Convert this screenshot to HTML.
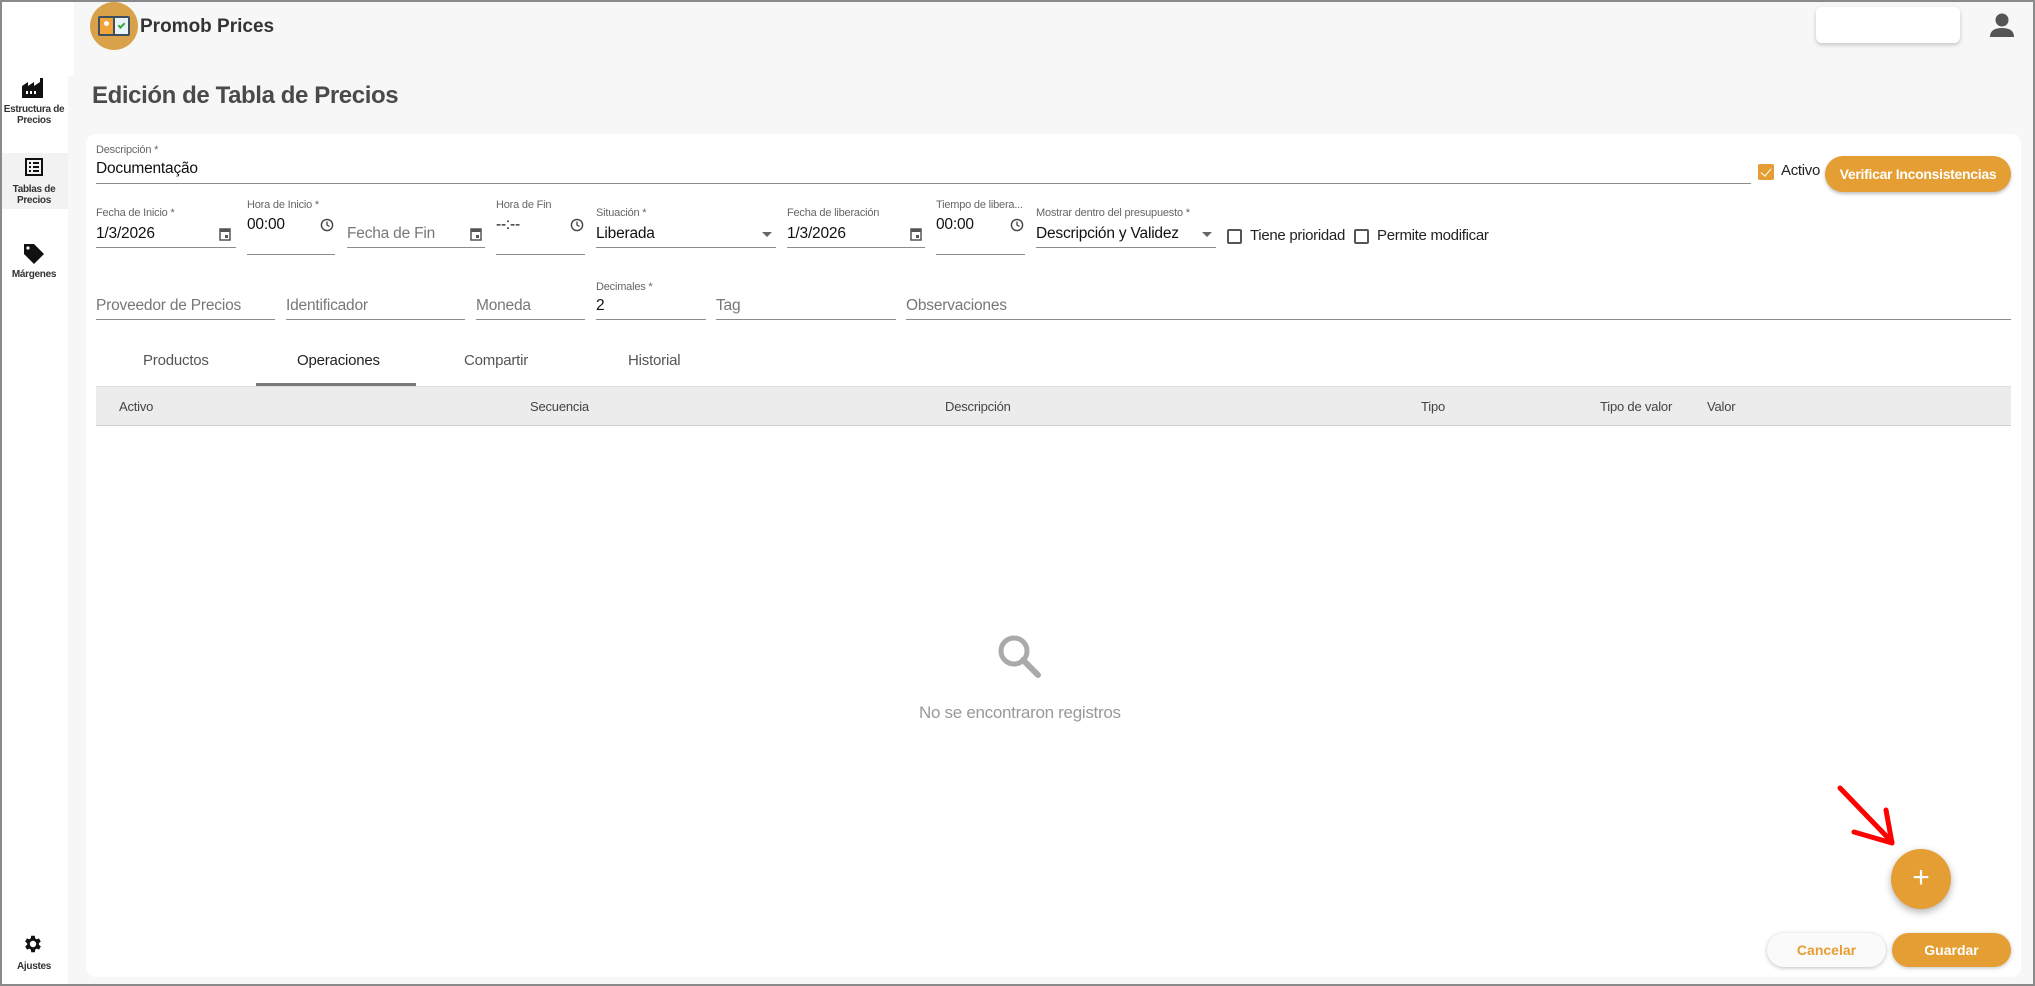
<!DOCTYPE html>
<html><head><meta charset="utf-8"><style>
*{box-sizing:border-box;margin:0;padding:0}
body{width:2035px;height:986px;overflow:hidden;background:#f7f7f7;font-family:"Liberation Sans",sans-serif;position:relative;color:#222}
.a{position:absolute;white-space:nowrap}
.frame{position:absolute;left:0;top:0;width:2035px;height:986px;border:2px solid #8a8a8a;z-index:50;pointer-events:none}
.side{position:absolute;left:0;top:0;width:68px;height:986px;background:#fff}
.lbl{font-size:11px;color:#666;letter-spacing:-.2px}
.val{font-size:15.5px;color:#111;letter-spacing:-.2px}
.ph{font-size:15.5px;color:#777;letter-spacing:-.2px}
.ul{position:absolute;height:1px;background:#8c8c8c}
.nav{font-size:10px;color:#333;font-weight:bold;text-align:center;width:68px;line-height:11px;letter-spacing:-.3px}
.cb{position:absolute;width:15px;height:15px;border:2px solid #555;border-radius:2px}
.th{font-size:13px;color:#444;letter-spacing:-.2px}
.tab{font-size:15px;color:#555;letter-spacing:-.2px}
</style></head><body>
<div class="side"></div>
<div class="a" style="left:0;top:0;width:74px;height:76px;background:#fff"></div>
<div class="a" style="left:90px;top:2px;width:48px;height:48px;border-radius:50%;background:#d9a24a;overflow:hidden">
<div style="position:absolute;left:8px;top:14px;width:32px;height:20px;background:#3d4f63;border-radius:2px"></div>
<div style="position:absolute;left:10px;top:16px;width:13px;height:16px;background:#f2a33a"></div>
<div style="position:absolute;left:25px;top:16px;width:13px;height:16px;background:#e8f4f8"></div>
<div style="position:absolute;left:14px;top:19px;width:5px;height:5px;border-radius:50%;background:#fff"></div>
<div style="position:absolute;left:28px;top:21px;width:7px;height:4px;border-left:2px solid #3a3;border-bottom:2px solid #3a3;transform:rotate(-45deg)"></div>
</div>
<div class="a" style="left:140px;top:16px;font-size:19px;color:#333;font-weight:bold">Promob Prices</div>
<div class="a" style="left:1816px;top:7px;width:144px;height:36px;background:#fff;border-radius:6px;box-shadow:0 2px 4px rgba(0,0,0,.2)"></div>
<svg class="a" style="left:1990px;top:12px" width="24" height="26" viewBox="0 0 24 26"><circle cx="12" cy="8" r="6.5" fill="#555"/><path d="M0 25 Q0 16 12 16 Q24 16 24 25Z" fill="#555"/></svg>

<svg class="a" style="left:22px;top:78px" width="24" height="20" viewBox="0 0 24 20"><path d="M0 20V8l6-4v4l6-4v4l6-4V0h3v20Z" fill="#111"/><rect x="4" y="13" width="2" height="3" fill="#fff"/><rect x="8" y="13" width="2" height="3" fill="#fff"/><rect x="12" y="13" width="2" height="3" fill="#fff"/></svg>
<div class="a nav" style="left:0;top:104px">Estructura de<br>Precios</div>
<div class="a" style="left:0;top:153px;width:68px;height:56px;background:#f2f2f2"></div>
<svg class="a" style="left:25px;top:158px" width="18" height="18" viewBox="0 0 18 18"><rect x="1" y="1" width="16" height="16" fill="none" stroke="#111" stroke-width="2"/><rect x="4" y="4" width="2" height="2" fill="#111"/><rect x="8" y="4" width="6" height="2" fill="#111"/><rect x="4" y="8" width="2" height="2" fill="#111"/><rect x="8" y="8" width="6" height="2" fill="#111"/><rect x="4" y="12" width="2" height="2" fill="#111"/><rect x="8" y="12" width="6" height="2" fill="#111"/></svg>
<div class="a nav" style="left:0;top:184px">Tablas de<br>Precios</div>
<svg class="a" style="left:22px;top:242px" width="24" height="24" viewBox="0 0 24 24"><path d="M2 2h10l10 10-10 10L2 12Z" fill="#111"/><circle cx="6" cy="6" r="1.6" fill="#fff"/></svg>
<div class="a nav" style="left:0;top:269px">Márgenes</div>
<svg class="a" style="left:22px;top:933px" width="22" height="22" viewBox="0 0 24 24"><path fill="#111" d="M19.4 13a7.5 7.5 0 000-2l2.1-1.6-2-3.5-2.5 1a7 7 0 00-1.7-1L15 3h-4l-.4 2.9a7 7 0 00-1.7 1l-2.5-1-2 3.5L6.6 11a7.5 7.5 0 000 2l-2.1 1.6 2 3.5 2.5-1a7 7 0 001.7 1L11 21h4l.4-2.9a7 7 0 001.7-1l2.5 1 2-3.5ZM13 15.5a3.5 3.5 0 110-7 3.5 3.5 0 010 7z" transform="translate(-1 0)"/></svg>
<div class="a nav" style="left:0;top:961px">Ajustes</div>

<div class="a" style="left:92px;top:82px;font-size:24px;font-weight:bold;color:#4a4a4a;letter-spacing:-.4px">Edición de Tabla de Precios</div>

<div class="a" style="left:86px;top:134px;width:1935px;height:843px;background:#fff;border-radius:10px"></div>

<div class="a lbl" style="left:96px;top:144px">Descripción *</div>
<div class="a val" style="left:96px;top:160px">Documentação</div>
<div class="ul" style="left:96px;top:183px;width:1655px"></div>
<div class="a" style="left:1758px;top:164px;width:16px;height:16px;background:#e59e33;border-radius:2px"></div>
<div class="a" style="left:1763px;top:166px;width:6px;height:10px;border-right:1.5px solid #fff;border-bottom:1.5px solid #fff;transform:rotate(40deg)"></div>
<div class="a" style="left:1781px;top:162px;font-size:15px;letter-spacing:-.3px">Activo</div>
<div class="a" style="left:1825px;top:156px;width:186px;height:36px;background:#e59e33;border-radius:18px;box-shadow:0 2px 3px rgba(0,0,0,.25);color:#fff;font-weight:bold;font-size:14px;text-align:center;line-height:36px;letter-spacing:-.3px">Verificar Inconsistencias</div>

<div class="a lbl" style="left:96px;top:207px">Fecha de Inicio *</div>
<div class="a val" style="left:96px;top:225px">1/3/2026</div>
<div class="ul" style="left:96px;top:247px;width:140px"></div>
<div class="a lbl" style="left:247px;top:199px">Hora de Inicio *</div>
<div class="a val" style="left:247px;top:216px">00:00</div>
<div class="ul" style="left:247px;top:254px;width:88px"></div>
<div class="a ph" style="left:347px;top:225px">Fecha de Fin</div>
<div class="ul" style="left:347px;top:247px;width:138px"></div>
<div class="a lbl" style="left:496px;top:199px">Hora de Fin</div>
<div class="a val" style="left:496px;top:216px">--:--</div>
<div class="ul" style="left:496px;top:254px;width:89px"></div>
<div class="a lbl" style="left:596px;top:207px">Situación *</div>
<div class="a val" style="left:596px;top:225px">Liberada</div>
<div class="a" style="left:762px;top:232px;border:5px solid transparent;border-top:5px solid #666"></div>
<div class="ul" style="left:596px;top:247px;width:180px"></div>
<div class="a lbl" style="left:787px;top:207px">Fecha de liberación</div>
<div class="a val" style="left:787px;top:225px">1/3/2026</div>
<div class="ul" style="left:787px;top:247px;width:138px"></div>
<div class="a lbl" style="left:936px;top:199px">Tiempo de libera...</div>
<div class="a val" style="left:936px;top:216px">00:00</div>
<div class="ul" style="left:936px;top:254px;width:89px"></div>
<div class="a lbl" style="left:1036px;top:207px">Mostrar dentro del presupuesto *</div>
<div class="a val" style="left:1036px;top:225px">Descripción y Validez</div>
<div class="a" style="left:1202px;top:232px;border:5px solid transparent;border-top:5px solid #666"></div>
<div class="ul" style="left:1036px;top:247px;width:180px"></div>
<div class="cb" style="left:1227px;top:229px"></div>
<div class="a" style="left:1250px;top:227px;font-size:15px;letter-spacing:-.3px">Tiene prioridad</div>
<div class="cb" style="left:1354px;top:229px"></div>
<div class="a" style="left:1377px;top:227px;font-size:15px;letter-spacing:-.3px">Permite modificar</div>
<svg class="a" style="left:219px;top:227px" width="12" height="14" viewBox="0 0 12 14"><rect x="1" y="2" width="10" height="11" fill="none" stroke="#555" stroke-width="1.5"/><rect x="1" y="2" width="10" height="3" fill="#555"/><rect x="6" y="8" width="3" height="3" fill="#555"/></svg>
<svg class="a" style="left:470px;top:227px" width="12" height="14" viewBox="0 0 12 14"><rect x="1" y="2" width="10" height="11" fill="none" stroke="#555" stroke-width="1.5"/><rect x="1" y="2" width="10" height="3" fill="#555"/><rect x="6" y="8" width="3" height="3" fill="#555"/></svg>
<svg class="a" style="left:910px;top:227px" width="12" height="14" viewBox="0 0 12 14"><rect x="1" y="2" width="10" height="11" fill="none" stroke="#555" stroke-width="1.5"/><rect x="1" y="2" width="10" height="3" fill="#555"/><rect x="6" y="8" width="3" height="3" fill="#555"/></svg>
<svg class="a" style="left:320px;top:218px" width="14" height="14" viewBox="0 0 14 14"><circle cx="7" cy="7" r="5.6" fill="none" stroke="#444" stroke-width="1.4"/><path d="M7 3.5V7l2.5 1.5" fill="none" stroke="#444" stroke-width="1.3"/></svg>
<svg class="a" style="left:570px;top:218px" width="14" height="14" viewBox="0 0 14 14"><circle cx="7" cy="7" r="5.6" fill="none" stroke="#444" stroke-width="1.4"/><path d="M7 3.5V7l2.5 1.5" fill="none" stroke="#444" stroke-width="1.3"/></svg>
<svg class="a" style="left:1010px;top:218px" width="14" height="14" viewBox="0 0 14 14"><circle cx="7" cy="7" r="5.6" fill="none" stroke="#444" stroke-width="1.4"/><path d="M7 3.5V7l2.5 1.5" fill="none" stroke="#444" stroke-width="1.3"/></svg>

<div class="a ph" style="left:96px;top:297px">Proveedor de Precios</div>
<div class="ul" style="left:96px;top:319px;width:179px"></div>
<div class="a ph" style="left:286px;top:297px">Identificador</div>
<div class="ul" style="left:286px;top:319px;width:179px"></div>
<div class="a ph" style="left:476px;top:297px">Moneda</div>
<div class="ul" style="left:476px;top:319px;width:109px"></div>
<div class="a lbl" style="left:596px;top:281px">Decimales *</div>
<div class="a val" style="left:596px;top:297px">2</div>
<div class="ul" style="left:596px;top:319px;width:110px"></div>
<div class="a ph" style="left:716px;top:297px">Tag</div>
<div class="ul" style="left:716px;top:319px;width:180px"></div>
<div class="a ph" style="left:906px;top:297px">Observaciones</div>
<div class="ul" style="left:906px;top:319px;width:1105px"></div>

<div class="a tab" style="left:143px;top:352px">Productos</div>
<div class="a tab" style="left:297px;top:352px;color:#222">Operaciones</div>
<div class="a tab" style="left:464px;top:352px">Compartir</div>
<div class="a tab" style="left:628px;top:352px">Historial</div>
<div class="a" style="left:256px;top:383px;width:160px;height:3px;background:#7a7a7a"></div>
<div class="a" style="left:96px;top:386px;width:1915px;height:40px;background:#ececec;border-top:1px solid #ddd;border-bottom:1px solid #d0d0d0"></div>
<div class="a th" style="left:119px;top:399px">Activo</div>
<div class="a th" style="left:530px;top:399px">Secuencia</div>
<div class="a th" style="left:945px;top:399px">Descripción</div>
<div class="a th" style="left:1421px;top:399px">Tipo</div>
<div class="a th" style="left:1600px;top:399px">Tipo de valor</div>
<div class="a th" style="left:1707px;top:399px">Valor</div>

<svg class="a" style="left:995px;top:632px" width="48" height="48" viewBox="0 0 48 48"><circle cx="19" cy="19" r="13" fill="none" stroke="#aaa" stroke-width="5"/><path d="M28 28l15 15" stroke="#aaa" stroke-width="6" stroke-linecap="round"/></svg>
<div class="a" style="left:919px;top:703px;width:200px;text-align:center;font-size:17px;color:#999;letter-spacing:-.3px">No se encontraron registros</div>

<div class="a" style="left:1891px;top:849px;width:60px;height:60px;border-radius:50%;background:#e59e33;box-shadow:0 3px 8px rgba(0,0,0,.3);color:#fff;font-size:30px;text-align:center;line-height:58px">+</div>
<svg class="a" style="left:1830px;top:780px" width="80" height="75" viewBox="0 0 80 75"><path d="M10 8L62 62" stroke="#f00" stroke-width="5" stroke-linecap="round"/><path d="M24 52L62 63L56 30" fill="none" stroke="#f00" stroke-width="5" stroke-linecap="round" stroke-linejoin="round"/></svg>

<div class="a" style="left:1767px;top:933px;width:119px;height:34px;border-radius:17px;background:#fafafa;box-shadow:0 1px 4px rgba(0,0,0,.25);color:#e59e33;font-weight:bold;font-size:14px;text-align:center;line-height:34px">Cancelar</div>
<div class="a" style="left:1892px;top:933px;width:119px;height:34px;border-radius:17px;background:#e59e33;box-shadow:0 1px 4px rgba(0,0,0,.25);color:#fff;font-weight:bold;font-size:14px;text-align:center;line-height:34px">Guardar</div>
<div class="frame"></div>
</body></html>
